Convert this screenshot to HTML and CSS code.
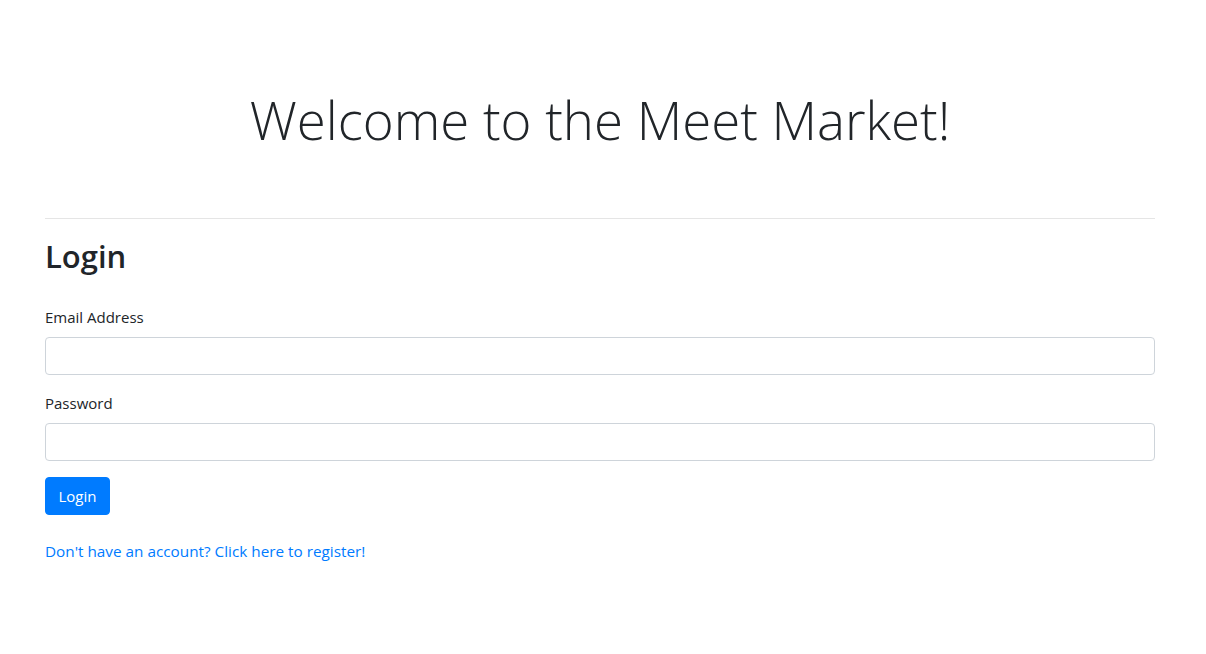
FILE: index.html
```html
<!DOCTYPE html>
<html lang="en">
<head>
<meta charset="utf-8">
<title>Meet Market - Login</title>
<link rel="stylesheet" href="styles.css">
</head>
<body>
<main class="container">
  <header class="hero">
    <h1 class="display">Welcome to the Meet Market!</h1>
  </header>
  <hr class="divider">
  <section class="login">
    <h2 class="login-title">Login</h2>
    <form class="login-form">
      <div class="form-group">
        <label class="form-label" for="email">Email Address</label>
        <input class="form-control" id="email" type="email">
      </div>
      <div class="form-group">
        <label class="form-label" for="password">Password</label>
        <input class="form-control" id="password" type="password">
      </div>
      <button class="btn-primary" type="button">Login</button>
    </form>
    <p class="register"><a href="#" class="register-link">Don't have an account? Click here to register!</a></p>
  </section>
</main>
</body>
</html>
```
FILE: styles.css
```css
* { box-sizing: border-box; }
html, body { margin: 0; padding: 0; background: #fff; }
body {
  font-family: "Open Sans", "Noto Sans", sans-serif;
  font-size: 15px;
  line-height: 24px;
  color: #212529;
}
.container {
  width: 1110px;
  margin-left: 45px;
}
.hero {
  padding-top: 86px;
  text-align: center;
}
.display {
  margin: 0;
  font-weight: 300;
  font-size: 52.75px;
  line-height: 67px;
  color: #212529;
}
.divider {
  margin: 65px 0 0 0;
  border: 0;
  border-top: 1px solid rgba(0,0,0,0.1);
  height: 0;
}
.login-title {
  margin: 18px 0 0 0;
  font-size: 31px;
  font-weight: 600;
  line-height: 38px;
}
.login-form {
  margin-top: 30px;
}
.form-group {
  margin-bottom: 16px;
}
.form-label {
  display: block;
  margin-bottom: 8px;
}
.form-control {
  display: block;
  width: 100%;
  height: 38px;
  border: 1px solid #ced4da;
  border-radius: 4px;
  background: #fff;
  font: inherit;
  padding: 6px 12px;
}
.btn-primary {
  display: block;
  height: 38px;
  width: 65px;
  padding: 0;
  background: #007bff;
  border: 1px solid #007bff;
  border-radius: 4px;
  color: #fff;
  font: inherit;
}
.register {
  margin: 24px 0 0 0;
}
.register-link {
  color: #007bff;
  text-decoration: none;
  font-size: 15.3px;
}
```
